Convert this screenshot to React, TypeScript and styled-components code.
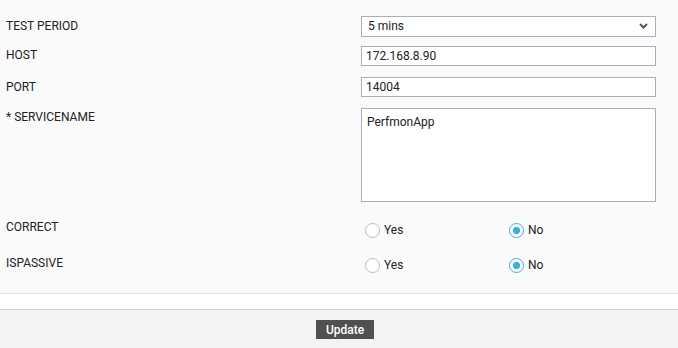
import React from "react";
import styled, { createGlobalStyle } from "styled-components";

const Global = createGlobalStyle`
  html, body { margin: 0; padding: 0; background: #fafafa; }
  body { font-family: Roboto, "Liberation Sans", Arial, sans-serif; }
  #root { width: 678px; height: 348px; overflow: hidden; }
`;

const Page = styled.div`
  display: flex;
  flex-direction: column;
  width: 678px;
  height: 348px;
`;

const Form = styled.div`
  background: #fafafa;
  padding: 15px 22px 18px 6px;
  border-bottom: 1px solid #e2e2e2;
  display: flex;
  flex-direction: column;
`;

const Row = styled.div<{ $mb?: number }>`
  display: grid;
  grid-template-columns: 355px 295px;
  align-items: start;
  margin-bottom: ${(p) => p.$mb ?? 0}px;
`;

const Label = styled.div<{ $pad?: number }>`
  font-size: 12px;
  line-height: 14px;
  color: #222;
  padding-top: ${(p) => p.$pad ?? 0}px;
`;

const SelectWrap = styled.div`
  position: relative;
  height: 21px;
`;

const Select = styled.select`
  appearance: none;
  -webkit-appearance: none;
  width: 100%;
  height: 21px;
  box-sizing: border-box;
  border: 1px solid #a9aebb;
  border-radius: 0;
  background: #fff;
  font-family: Roboto, "Liberation Sans", Arial, sans-serif;
  font-size: 12px;
  color: #222;
  padding: 0 6px;
  outline: none;
`;

const Chevron = styled.svg`
  position: absolute;
  right: 8px;
  top: 8px;
  pointer-events: none;
`;

const Input = styled.input`
  width: 100%;
  height: 20px;
  box-sizing: border-box;
  border: 1px solid #a9aebb;
  border-radius: 0;
  background: #fff;
  font-family: Roboto, "Liberation Sans", Arial, sans-serif;
  font-size: 12px;
  color: #222;
  padding: 0 4px;
  outline: none;
  margin: 0;
`;

const TextArea = styled.textarea`
  width: 100%;
  height: 94px;
  box-sizing: border-box;
  border: 1px solid #a9aebb;
  border-radius: 0;
  background: #fff;
  font-family: Roboto, "Liberation Sans", Arial, sans-serif;
  font-size: 12px;
  line-height: 14px;
  color: #222;
  padding: 6px 5px;
  resize: none;
  outline: none;
  margin: 0;
  display: block;
`;

const RadioGroup = styled.div`
  display: flex;
  padding-left: 4px;
  height: 20px;
  align-items: center;
`;

const Option = styled.label`
  display: flex;
  align-items: center;
  gap: 4px;
  width: 144px;
  font-size: 12px;
  line-height: 14px;
  color: #222;
`;

const Radio = styled.input`
  appearance: none;
  -webkit-appearance: none;
  width: 15px;
  height: 15px;
  margin: 0;
  box-sizing: border-box;
  border: 1px solid #b7bcc5;
  border-radius: 50%;
  background: #fff;
  &:checked {
    border: 1.5px solid #3aafe0;
    background: radial-gradient(circle, #3aafe0 0 3.3px, #fff 3.9px);
  }
`;

const Band = styled.div`
  height: 15px;
  background: #fff;
  border-bottom: 1px solid #cfcfcf;
`;

const Footer = styled.div`
  flex: 1;
  background: #f4f4f4;
  display: flex;
  justify-content: center;
  align-items: flex-start;
  padding: 10px 0 0 12px;
`;

const Button = styled.button`
  width: 58px;
  height: 19px;
  border: 0;
  border-radius: 0;
  background: #505050;
  color: #fff;
  font-family: Roboto, "Liberation Sans", Arial, sans-serif;
  font-size: 12px;
  font-weight: 500;
  padding: 0;
  cursor: pointer;
`;

function RadioRow({ label, name, pad }: { label: string; name: string; pad: number }) {
  return (
    <>
      <Label $pad={pad}>{label}</Label>
      <RadioGroup>
        <Option>
          <Radio type="radio" name={name} />
          Yes
        </Option>
        <Option>
          <Radio type="radio" name={name} defaultChecked />
          No
        </Option>
      </RadioGroup>
    </>
  );
}

export default function App() {
  return (
    <>
      <Global />
      <Page>
        <Form>
          <Row $mb={10}>
            <Label $pad={4}>TEST PERIOD</Label>
            <SelectWrap>
              <Select defaultValue="5">
                <option value="5">5 mins</option>
              </Select>
              <Chevron width="9" height="6" viewBox="0 0 9 6">
                <path d="M1 1 L4.5 4.5 L8 1" fill="none" stroke="#555" strokeWidth="2" />
              </Chevron>
            </SelectWrap>
          </Row>
          <Row $mb={11}>
            <Label $pad={2}>HOST</Label>
            <Input defaultValue="172.168.8.90" />
          </Row>
          <Row $mb={11}>
            <Label $pad={3}>PORT</Label>
            <Input defaultValue="14004" />
          </Row>
          <Row $mb={18}>
            <Label $pad={2}>* SERVICENAME</Label>
            <TextArea defaultValue="PerfmonApp" />
          </Row>
          <Row $mb={15}>
            <RadioRow label="CORRECT" name="correct" pad={0} />
          </Row>
          <Row>
            <RadioRow label="ISPASSIVE" name="ispassive" pad={1} />
          </Row>
        </Form>
        <Band />
        <Footer>
          <Button>Update</Button>
        </Footer>
      </Page>
    </>
  );
}
